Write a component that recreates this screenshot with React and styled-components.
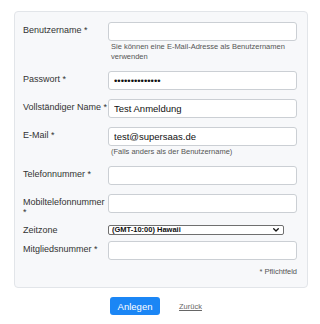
import React from 'react';
import styled, { createGlobalStyle } from 'styled-components';

const GlobalStyle = createGlobalStyle`
  html, body {
    margin: 0;
    padding: 0;
    background: #ffffff;
  }
  body {
    font-family: "Liberation Sans", Arial, Helvetica, sans-serif;
    color: #333;
  }
`;

const Page = styled.div`
  width: 320px;
  height: 324px;
  padding-top: 11px;
  box-sizing: border-box;
`;

const Panel = styled.div`
  margin-left: 14px;
  width: 294px;
  box-sizing: border-box;
  background: #f7f8fa;
  border: 1px solid #e2e5e9;
  border-radius: 4px;
  padding: 10px 10px 10px 8px;
`;

const Row = styled.div`
  display: flex;
  align-items: flex-start;
  margin-top: ${p => p.$top ?? 9}px;
  &:first-child {
    margin-top: 0;
  }
`;

const Label = styled.label`
  flex: 0 0 85px;
  width: 85px;
  font-size: 9px;
  line-height: 10px;
  color: #333;
  padding-top: ${p => p.$pad ?? 2.5}px;
`;

const Field = styled.div`
  flex: 1;
  min-width: 0;
`;

const TextInput = styled.input`
  display: block;
  width: 100%;
  height: 19px;
  box-sizing: border-box;
  margin: 0;
  padding: 0 5px;
  border: 1px solid #cbcfd4;
  border-radius: 3px;
  background: #ffffff;
  font-family: "Liberation Sans", Arial, Helvetica, sans-serif;
  font-size: 9.5px;
  color: #111;
  outline: none;
`;

const Hint = styled.div`
  margin-top: 1px;
  padding-left: 3px;
  font-size: 7.5px;
  line-height: 10px;
  color: #555;
`;

const SelectWrap = styled.div`
  position: relative;
  width: 176px;
`;

const Select = styled.select`
  display: block;
  width: 100%;
  height: 10px;
  box-sizing: border-box;
  margin: 0;
  padding: 0 0 0 3px;
  appearance: none;
  -webkit-appearance: none;
  border: 1px solid #6f6f6f;
  border-radius: 2px;
  background: #ffffff;
  font-family: "Liberation Sans", Arial, Helvetica, sans-serif;
  font-size: 7.5px;
  line-height: 8px;
  font-weight: 700;
  color: #111;
  outline: none;
`;

const Chevron = styled.svg`
  position: absolute;
  right: 5px;
  top: 3px;
  width: 6px;
  height: 4px;
  pointer-events: none;
`;

const Required = styled.div`
  margin-top: 7px;
  text-align: right;
  font-size: 7.5px;
  line-height: 10px;
  color: #555;
`;

const Actions = styled.div`
  display: flex;
  align-items: center;
  justify-content: center;
  gap: 19px;
  margin-top: 9px;
  padding-right: 8px;
`;

const SubmitButton = styled.button`
  width: 50px;
  height: 18px;
  padding: 0;
  border: none;
  border-radius: 3px;
  background: #1b86f5;
  color: #ffffff;
  font-family: "Liberation Sans", Arial, Helvetica, sans-serif;
  font-size: 9.5px;
  cursor: pointer;
`;

const BackLink = styled.a`
  font-size: 7.5px;
  color: #666;
  text-decoration: underline;
  cursor: pointer;
`;

const rows = [
  { label: 'Passwort *', type: 'password', value: '••••••••••••••' },
  { label: 'Vollständiger Name *', value: 'Test Anmeldung' },
];

export default function App() {
  return (
    <>
      <GlobalStyle />
      <Page>
        <Panel>
          <Row>
            <Label>Benutzername *</Label>
            <Field>
              <TextInput defaultValue="" />
              <Hint>Sie können eine E-Mail-Adresse als Benutzernamen verwenden</Hint>
            </Field>
          </Row>
          {rows.map(r => (
            <Row key={r.label}>
              <Label>{r.label}</Label>
              <Field>
                <TextInput type={r.type || 'text'} defaultValue={r.value} />
              </Field>
            </Row>
          ))}
          <Row>
            <Label>E-Mail *</Label>
            <Field>
              <TextInput defaultValue="test@supersaas.de" />
              <Hint>(Falls anders als der Benutzername)</Hint>
            </Field>
          </Row>
          <Row>
            <Label>Telefonnummer *</Label>
            <Field>
              <TextInput defaultValue="" />
            </Field>
          </Row>
          <Row>
            <Label>Mobiltelefonnummer *</Label>
            <Field>
              <TextInput defaultValue="" />
            </Field>
          </Row>
          <Row $top={8}>
            <Label $pad={0.5}>Zeitzone</Label>
            <Field>
              <SelectWrap>
                <Select defaultValue="hawaii">
                  <option value="hawaii">(GMT-10:00) Hawaii</option>
                </Select>
                <Chevron viewBox="0 0 6 4">
                  <path d="M0.7 0.7 L3 3 L5.3 0.7" fill="none" stroke="#111" strokeWidth="1.3" strokeLinecap="round" strokeLinejoin="round" />
                </Chevron>
              </SelectWrap>
            </Field>
          </Row>
          <Row $top={6}>
            <Label>Mitgliedsnummer *</Label>
            <Field>
              <TextInput defaultValue="" />
            </Field>
          </Row>
          <Required>* Pflichtfeld</Required>
        </Panel>
        <Actions>
          <SubmitButton type="button">Anlegen</SubmitButton>
          <BackLink>Zurück</BackLink>
        </Actions>
      </Page>
    </>
  );
}
